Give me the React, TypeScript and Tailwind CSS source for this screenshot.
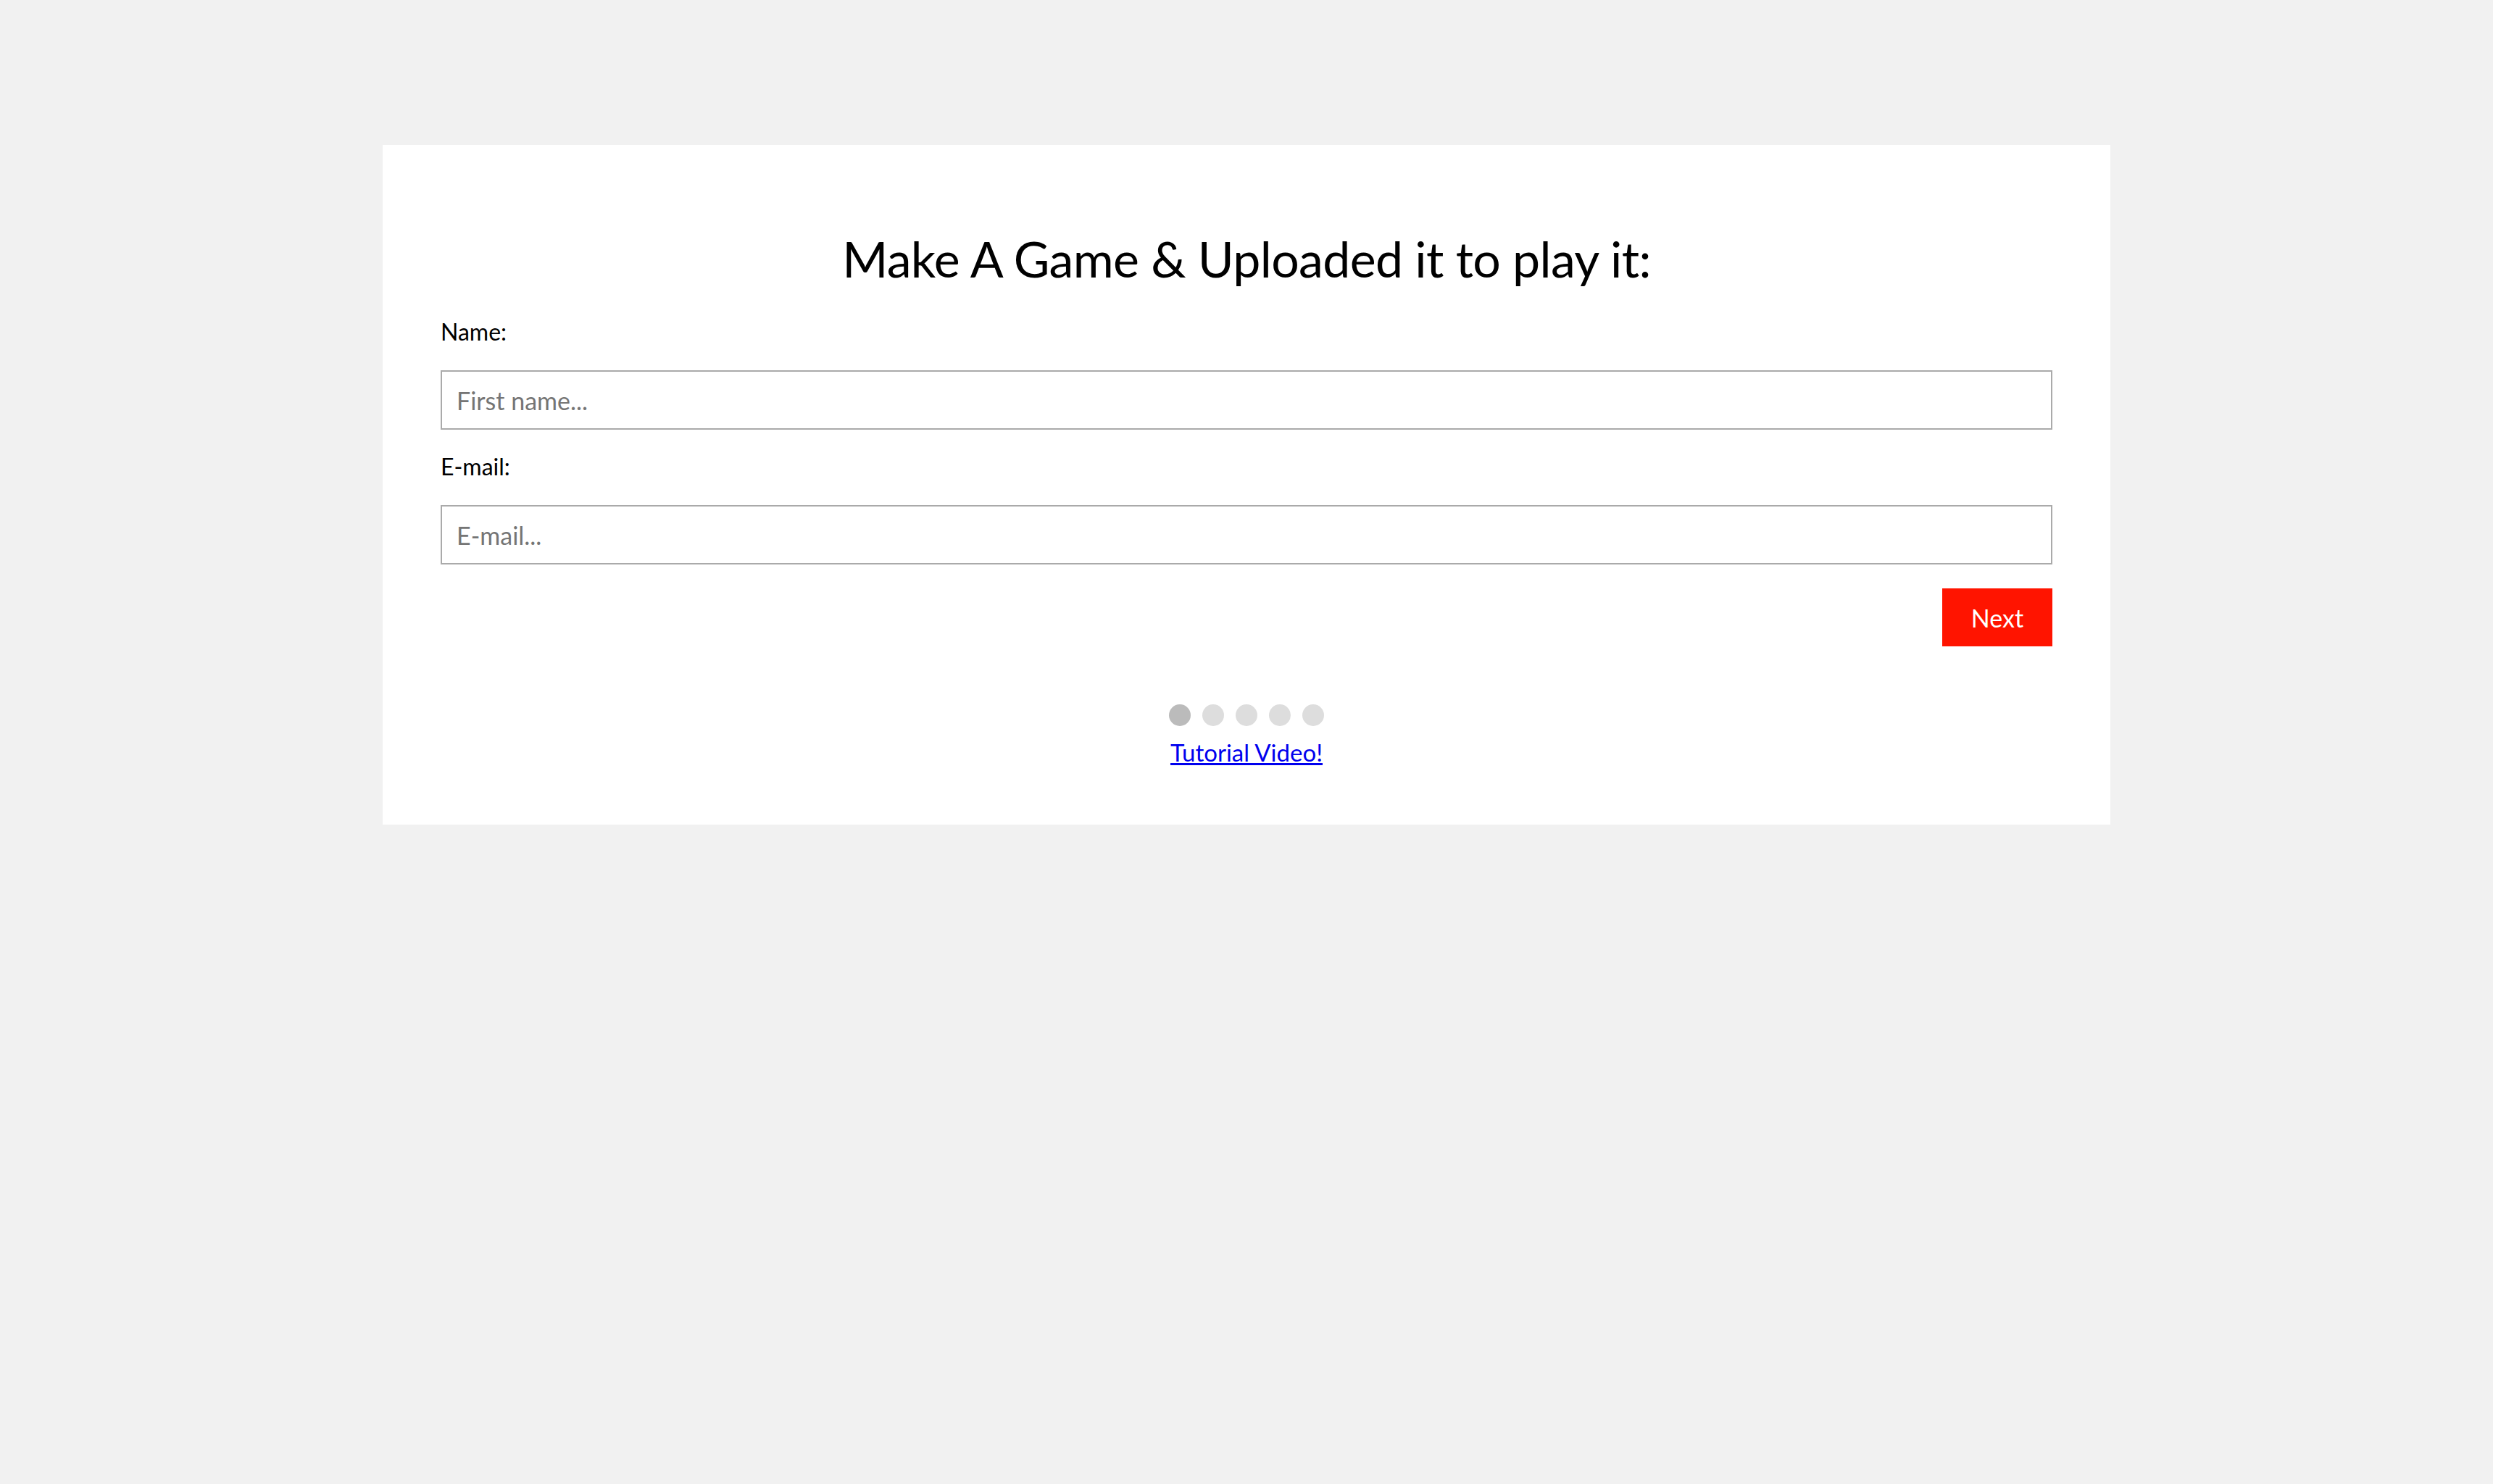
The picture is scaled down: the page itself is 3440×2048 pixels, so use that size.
import React from "react";

export default function App() {
  const dots = [true, false, false, false, false];
  return (
    <div className="min-h-[2048px] w-full bg-[#f1f1f1] pt-[200px]" style={{ fontFamily: "Lato, 'Noto Sans', sans-serif" }}>
      <div className="ml-[528px] w-[2384px] bg-white px-[80px] pb-[80px] pt-[80px] flex flex-col">
        <h1 className="mt-[37px] h-[80px] text-center text-[68px] leading-[80px] font-normal tracking-[-0.6px] text-black">
          Make A Game &amp; Uploaded it to play it:
        </h1>
        <p className="mt-[41px] h-[40px] text-[32px] leading-[40px] text-black">Name:</p>
        <input
          className="mt-[33px] h-[82px] w-full border-2 border-[#aaaaaa] bg-white px-[20px] text-[34px] text-black outline-none placeholder:text-[#757575]"
          placeholder="First name..."
        />
        <p className="mt-[31px] h-[40px] text-[32px] leading-[40px] text-black">E-mail:</p>
        <input
          className="mt-[33px] h-[82px] w-full border-2 border-[#aaaaaa] bg-white px-[20px] text-[34px] text-black outline-none placeholder:text-[#757575]"
          placeholder="E-mail..."
        />
        <div className="mt-[33px] flex justify-end">
          <button className="h-[80px] w-[152px] bg-[#ff1400] text-[34px] text-white">Next</button>
        </div>
        <div className="mt-[80px] flex justify-center gap-[16px]">
          {dots.map((a, i) => (
            <span
              key={i}
              className={a ? "h-[30px] w-[30px] rounded-full bg-[#bbbbbb]" : "h-[30px] w-[30px] rounded-full bg-[#dddddd]"}
            />
          ))}
        </div>
        <div className="mt-[16px] flex justify-center">
          <a href="#" className="h-[40px] text-[33px] leading-[40px] text-[#0000ee] underline">
            Tutorial Video!
          </a>
        </div>
      </div>
    </div>
  );
}
